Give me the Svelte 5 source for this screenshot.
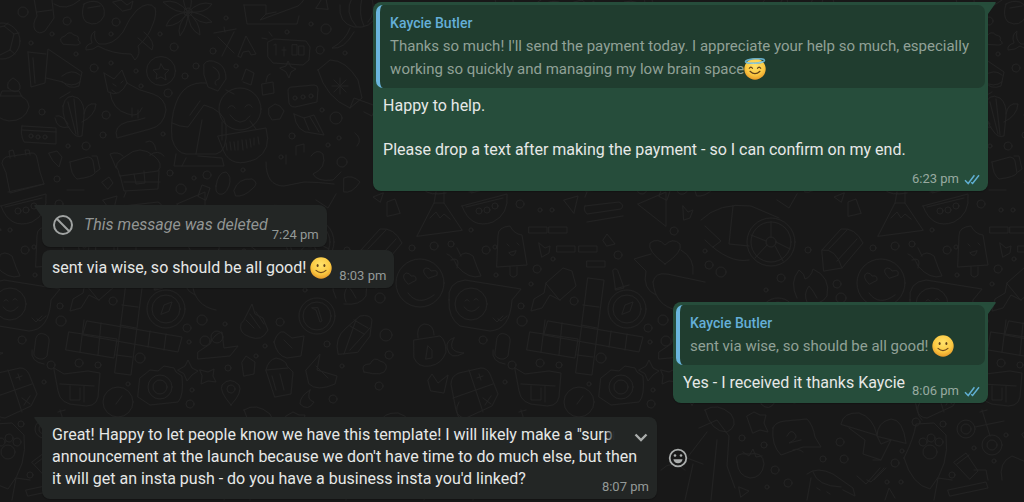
<script lang="ts">
  type Emoji = "smile" | "halo"

  interface Message {
    id: number
    mine: boolean
    text: string
    time: string
    tail?: boolean
    deleted?: boolean
    wide?: boolean
    hovered?: boolean
    emoji?: Emoji
    quote?: { name: string; text: string; emoji: Emoji }
  }

  const messages: Message[] = [
    {
      id: 1,
      mine: true,
      tail: true,
      wide: true,
      text: "Happy to help.\n\nPlease drop a text after making the payment - so I can confirm on my end.",
      time: "6:23 pm",
      quote: {
        name: "Kaycie Butler",
        text: "Thanks so much! I'll send the payment today. I appreciate your help so much, especially working so quickly and managing my low brain space",
        emoji: "halo",
      },
    },
    { id: 2, mine: false, tail: true, deleted: true, text: "This message was deleted", time: "7:24 pm" },
    { id: 3, mine: false, text: "sent via wise, so should be all good! ", emoji: "smile", time: "8:03 pm" },
    {
      id: 4,
      mine: true,
      tail: true,
      text: "Yes - I received it thanks Kaycie",
      time: "8:06 pm",
      quote: { name: "Kaycie Butler", text: "sent via wise, so should be all good! ", emoji: "smile" },
    },
    {
      id: 5,
      mine: false,
      tail: true,
      wide: true,
      hovered: true,
      text: "Great! Happy to let people know we have this template! I will likely make a \"surprise\"\nannouncement at the launch because we don't have time to do much else, but then\nit will get an insta push - do you have a business insta you'd linked?",
      time: "8:07 pm",
    },
  ]

  // small filler rings scattered between the doodles: x, y, radius
  const rings = [
    [23, 12, 5], [67, 21, 4], [116, 22, 4], [52, 34, 2], [31, 43, 2], [111, 34, 2], [160, 34, 2], [174, 47, 4],
    [213, 51, 3], [226, 18, 2], [311, 24, 2], [326, 29, 5], [320, 50, 4], [287, 32, 2], [345, 53, 2], [76, 54, 2],
    [94, 68, 4], [111, 63, 2], [136, 71, 2], [185, 76, 3], [196, 66, 3], [236, 66, 2], [168, 93, 4], [141, 86, 2],
    [42, 112, 3], [106, 115, 4], [322, 110, 2], [336, 118, 6], [103, 135, 3], [163, 134, 2], [86, 146, 4], [68, 146, 2],
    [292, 136, 3], [339, 138, 2], [328, 145, 2], [281, 157, 2], [342, 162, 5], [57, 179, 3], [170, 173, 3], [207, 175, 4],
    [181, 189, 5], [194, 178, 2], [243, 170, 2], [59, 204, 4], [79, 210, 2], [91, 210, 2], [10, 230, 2], [34, 247, 2],
    [434, 246, 4], [451, 244, 3], [25, 250, 4], [76, 269, 4], [92, 259, 2], [70, 284, 2], [35, 275, 2], [113, 301, 4],
    [60, 306, 3], [61, 321, 5], [157, 255, 4], [213, 231, 4], [244, 251, 2], [248, 265, 4], [260, 272, 5], [320, 278, 4],
    [305, 290, 2], [347, 250, 3], [376, 284, 4], [412, 248, 3], [380, 298, 5], [202, 320, 5], [187, 328, 4], [225, 324, 2],
    [280, 322, 4], [22, 340, 4], [51, 365, 4], [79, 363, 4], [98, 365, 3], [140, 358, 5], [189, 342, 2], [265, 346, 2],
    [327, 344, 3], [386, 335, 6], [389, 355, 4], [228, 368, 3], [256, 356, 2], [342, 366, 2], [44, 382, 2], [128, 384, 2],
    [192, 390, 2], [333, 399, 4], [379, 386, 4], [190, 404, 4], [379, 442, 4], [362, 459, 3], [383, 459, 4], [314, 470, 4],
    [327, 483, 4], [281, 438, 3], [303, 445, 3], [455, 422, 4], [441, 451, 2], [434, 463, 4], [426, 482, 2], [440, 482, 2],
    [30, 475, 3], [52, 448, 2], [72, 461, 2], [84, 435, 2], [21, 424, 3], [306, 487, 2],
  ]
</script>

{#snippet emojiIcon(kind: Emoji)}
  <svg class="emoji" viewBox="0 0 22 22" role="img" aria-label={kind}>
    <defs>
      <radialGradient id="face" cx="50%" cy="35%" r="65%">
        <stop offset="0" stop-color="#ffe26b" />
        <stop offset="0.65" stop-color="#fbc942" />
        <stop offset="1" stop-color="#e89b29" />
      </radialGradient>
    </defs>
    <circle cx="11" cy="11" r="10.7" fill="url(#face)" />
    {#if kind === "halo"}
      <path d="M5.3 10.3q1.6-2.5 3.2 0M13.5 10.3q1.6-2.5 3.2 0" fill="none" stroke="#60401b" stroke-width="1.2" stroke-linecap="round" />
      <path d="M6 13.3q5 4.8 10 0" fill="none" stroke="#60401b" stroke-width="1.2" stroke-linecap="round" />
      <ellipse cx="11" cy="3" rx="9.5" ry="2.2" fill="none" stroke="#66aeca" stroke-width="1.6" transform="rotate(-4 11 3)" />
      <path d="M3 4.6q7 2.2 16-.6" fill="none" stroke="#a6d8df" stroke-width="0.8" />
    {:else}
      <ellipse cx="7.6" cy="8.6" rx="1" ry="1.5" fill="#60401b" />
      <ellipse cx="14.4" cy="8.6" rx="1" ry="1.5" fill="#60401b" />
      <path d="M6 13.4q5 4.6 10 0" fill="none" stroke="#70491c" stroke-width="1.1" stroke-linecap="round" />
    {/if}
  </svg>
{/snippet}

<main class="chat">
  <svg class="wallpaper" aria-hidden="true">
    <defs>
      <pattern id="doodles" width="461" height="522" patternUnits="userSpaceOnUse">
        <g id="tile" fill="none" stroke="#222222" stroke-width="1" stroke-linejoin="round" stroke-linecap="round">
          {#each rings as [x, y, r]}
            <circle cx={x} cy={y} r={r} />
          {/each}
          <!-- globe, stocking, pot, cloud, whale -->
          <circle cx="2" cy="41" r="18" />
          <path d="M-12 30L4 26l10 8-4 16-12 6M4 26l4-3M14 34l5-1M10 50l5 4" />
          <path d="M34-2l3 18q-5 8-2 14 4 5 10 1l9-13-2-18M37 12l15-2M54 4q12 8 26-4" />
          <path d="M84 4q-4 12 2 18 12 6 18-6 2-10-6-14-8-2-14 2zM88 8l12-2" />
          <path d="M63 44q-6-6 2-8 4-6 9-1 6 1 4 5 5 4-1 5z" />
          <path d="M155 8q-6-8-18 2-8 8-14 22-10 14-24 12-6-4-4-13-6 4-3 12-7 2-6 7 8 0 12-4 14 8 33 8l4 6q6-6 3-14 10-8 15-22 4-10 2-16zM138 38l14 12q4-8-8-18" />
          <!-- flower -->
          <path d="M188 12q-8-12-2-20 10 8 2 20zM188 12q12-12 24-8-6 10-24 8zM188 12q14 0 24 10-12 4-24-10zM188 12q12 10 12 23-12-6-12-23zM188 12q0 14-8 24-4-10 8-24zM188 12q-8 14-22 14 4-12 22-14zM188 12q-12 2-25-10 14-4 25 10z" />
          <circle cx="188" cy="12" r="4" />
          <path d="M113 2l8-2 6 5 6-4-2 8-8 2z" />
          <!-- boots, bell, pumpkin -->
          <path d="M244 5l3 19h50l2-8M244 5h22v9l-6 6 38-14q8-6 8-14M266 14l10-2M316 8l9-14 3 15z" />
          <path d="M340 5q-2 18 14 22 18 2 22-12M352-2q-8 14 4 28M362-2q-4 16 2 28M372-2q4 16-4 24M350 28q-4 12-18 20 12 2 22-16" />
          <!-- letters and sign -->
          <path d="M214 33l22-4M224 27l1 5M218 37l16 16M234 32l-12 24M238 56l8-20 10 18-5 1-2-4-6 1-2 5z" />
          <path d="M268 42l6-3 32 2 4 6-1 13-6 5-30-2-5-6zM262 38l5 1M269 32l3 4M274 45l2-1v11M284 47v9M292 45v10h5v-10zM282 50h4M299 46h5v9h-5z" />
          <!-- coin, megaphone -->
          <circle cx="161" cy="71" r="14.5" />
          <path d="M161 64l3 5 5 1-4 4 1 6-5-3-5 2 1-5-4-4 6-1z" />
          <path d="M28 52l3 35 14-4 3-34 34 23-3 14q-10 4-16-4l-17-4M28 52l18 2M33 58l2 25M62 76q10-8 18-1M62 82q10 6 18 0" />
          <!-- fox -->
          <path d="M104 73l10 6 8-9 5 13q12 8 26 11 12 4 13 16-2 16-16 19l-33 9q-4-12 10-16 12-2 18-4M104 73l4 19q12 6 19-9M110 92q2 18 18 22 10 4 14-6M113 84l3 2M121 83l2-2M112 90l4 3M132 108v9M138 110v8" />
          <!-- person hugging emoji -->
          <path d="M204 64q4-6 14-1 8 4 8 16l-8 12-10-4-4-12zM213 67q8 4 6 12-6 2-3 6M206 83q-22-2-30 20-6 16-4 36 4 14 14 15l30 0q12-2 10-28-2-16-22-21l-16 22q-8 0-16-4M190 115l10-14M202 120l-6 34M226 90l8 4M176 154l-2 12h50l-2-8-24-2M186 158l-4 8M222 122v18" />
          <circle cx="240" cy="109" r="21" />
          <path d="M228 108q4-5 7 0M245 107q4-5 7 0M230 115q10 14 20 1M250 121l6 8" />
          <path d="M218 136l48-8q6 22-10 31-24 10-32-7zM226 143l1 7M230 142l1 8M234 142l1 8M238 141v9M242 140l1 10M246 140l1 8M250 139l1 8M254 138v7M258 137l1 7" />
          <!-- bubble, mitten, shell, star -->
          <path d="M288 91q0-4 4-4l22-2q4 0 4 4l-1 13-22 5q-5 0-6-4z" />
          <circle cx="295" cy="98" r="2" /><circle cx="303" cy="97" r="2" /><circle cx="311" cy="96" r="2" />
          <path d="M318 70l12-10q16 0 28 20l4 18-12 10q-24-10-32-38zM340 78v16M332 86h16M334 80l12 12M346 80l-12 12M350 108l4-10 22 8-4 10-8-4" />
          <path d="M294 114l10 4 10-3 10 20-12-2q-16 0-18-19zM304 118l5 12M310 117l9 15" />
          <path d="M280 68l6-2 2-5 3 6 5 2-5 3-2 6-3-6zM242 80l4-11 8 4-3 12-8-3M262 84l11-2 1 11-11 2zM266 82q1-8 4-8" />
          <path d="M269 108l6-4 5 2 4 5-4 8-8 1-3-5z" />
          <!-- ornament, cactus, tape, leaf -->
          <path d="M8 88q-2-6 5-10 8 4 7 11-4 6-12-1zM-4 96h26M0 96l2-5h17l3 6q6 2 7 10-4 14-20 14-12-2-16-10" />
          <path d="M60 98l10-6M63 106q3-14 15-8 7 6 6 18l-2 20q-6 2-10-4-10-12-9-26zM68 102l8 32M74 99l4 36M56 116q6-2 12 8M55 118q2 12 14 9M84 114q2-12 12-10-1 12-14 18" />
          <path d="M22 126l34 2v16l-32-2q-4-8-2-16zM22 130l34 2" />
          <circle cx="31" cy="136" r="2" /><circle cx="38" cy="137" r="2" /><circle cx="45" cy="137" r="2" />
          <!-- calendar, card, hut -->
          <path d="M2 163q0-4 4-6l26-4q4 0 5 5l3 14 4 12-34 9-4-20zM10 158l-1-7 4-1 2 7M26 155l-1-5 4 0 1 5M8 192l36-8" />
          <path d="M70 162l18-5q4 0 5 4l2 12q-2 4-18 6-6-4-7-17zM92 156l5 0 3 13-4 3M49 153l8-2 5 6-3 10-6-6z" />
          <path d="M118 170q-6-6 8-14 14-12 28 0 10 8 4 15l-38 5zM120 175l4 16 34-2 1-18M134 174l2 10 9-1-1-12M124 182h36M116 168q-4-10-6-14 8-3 13 2M146 142q8-4 10 8M150 155q8-6 14 1M126 192l-2 5M102 182l7-5 4 6-5 6zM67 190h17" />
          <!-- flip-flops, note, squirrel -->
          <path d="M216 186q2-14 10-14 6 4 3 14-4 10-10 8-4-2-3-8zM234 190q4-12 18-11 8 4 0 10-8 8-16 7zM198 196l4-11 8 3-4 12z" />
          <path d="M296 155v-9l8-2v8M286 155v9M311 156q6-8 12-2 4 14-10 20 4 8 20 6l8-8M266 162q0 24 18 24l20-4q14 0 30 2M344 178q8-4 16 4-8 12-16 10zM355 133q8 6 2 13" />
          <!-- mountain, watermelon, popsicle -->
          <path d="M417 236l17-33h10l18 27zM436 192l-2 11M444 192v11M430 218l6-6 4 6 4-4 6 5M424 190q6 6 22 3" />
          <path d="M1 206l45-12q2 20-14 28-22 8-31-16zM5 207l37-9" />
          <circle cx="18" cy="211" r="3" /><circle cx="26" cy="210" r="3" /><circle cx="34" cy="206" r="3" />
          <path d="M37 235q0-8 12-9 4 8 12 9l5 30-30 2zM49 267v8q3 4 7 0v-8M46 244l2 2M56 243l2 2M48 253q5 6 7-2z" />
          <path d="M103 200l14-4-4 17zM68 227h18v6H68zM88 227h18v6H88zM96 246h18v6H96zM118 246h18v6h-18zM126 261h18v6h-18z" />
          <path d="M124 206l34-4q6 3 2 7l-34 5q-4-4-2-8zM126 222l36-6M177 204l28-12v34zM222 206l5 6 5-2-3 8-6 2zM78 243l6 5 5-2-1 7-7 4zM142 240l4-6 8 10-8 2z" />
          <!-- peppers, heart face, chat bubble -->
          <path d="M-14 254q6 2 10 12 12 14 24 10-4-8-8-20-8-6-13 0M-4 248l4 8M-10 260q10-4 6 8" />
          <circle cx="420" cy="283" r="24" />
          <path d="M408 284q-8-8-2-11 4 0 5 3 6-1 5 4zM428 278q-8-8-2-10 4 0 5 3 8-2 6 4zM408 293q10 14 26 2" />
          <path d="M-12 300q-2-18 16-20l56 9-9 11q-2 30-22 31l-30-5q-12-8-11-26z" />
          <circle cx="10" cy="304" r="16" />
          <path d="M4 301q2-3 4 0M13 300q2-3 4 0M3 307q7 9 15 0M32 318l4 4 6-6M37 319l3 2 6-5" />
          <!-- brush -->
          <path d="M85 283l17-15 9 3 4 15-16 14zM85 283l-2 10-10 6-3 12 11-3 8-13 10 5" />
          <!-- crossword -->
          <path d="M127 278l16 2-12 95-16-2zM87 321l95 16-4 15-95-17zM69 332l48 7-3 19-48-8zM122 305l16 2M120 325l16 3M116 355l16 2M101 323l-3 32M150 331l-2 16M166 334l-2 16M84 320l-4 32" />
          <!-- compass, cat heart, sausages -->
          <circle cx="166" cy="309" r="19" /><circle cx="166" cy="309" r="14" />
          <path d="M161 314l3-9 8-3-3 9zM152 270q4-4 6 4l5 14-8 2zM154 289l14-4" />
          <path d="M204 264q-18-13-15-21 8-6 15 2 8-8 15-1 3 8-15 20zM190 254l-17 5 12 12q-4 18 10 24M220 250q14 8 12 24M192 282q2-10 14-8l38 8M192 282q2 24 24 28" />
          <!-- cart wheel, pencil, flame -->
          <circle cx="310" cy="242" r="24" /><circle cx="310" cy="242" r="20" /><circle cx="310" cy="242" r="5" />
          <path d="M310 237v-15M315 242l14 7M306 245l-12 13M314 246l8 15M305 241l-15-6M240 220q18-18 50-14l28 12M244 240q24 24 44 20M272 206l-4 38 20 2M244 226l16 15-8 6M316 200l12 8 8-14" />
          <path d="M361 250l19-21q14-2 22 14l-21 25-18 3zM361 250q14-2 20 18M368 249l18-19M376 261l20-22M380 202l-7-5 10-4zM387 216l0-14 8-3 5 14z" />
          <path d="M336 298q-8-16 2-28 6 4 6 9 6-2 8-10 18 8 14 27-6 10-22 8M346 302q-4-8 2-16 4 4 8 12" />
          <!-- lock, mic, moon -->
          <path d="M414 340l26-4q6 4 6 16-4 12-16 14-12 2-16-8zM418 338q-2-12 6-14 10 0 10 11M428 346l4 4v8l-6 1zM36 338q2-6 8-4 6 2 5 8l-2 14q-4 5-10 2-4-2-3-6zM32 350q-2 12 12 14M454 338q-8 14 10 15-14 8-17-5-1-8 7-10z" />
          <!-- dice, shield, camera -->
          <path d="M-10 384q0-8 8-11l22-5q6 0 9 6l8 20-6 12-26 12q-8 0-10-8zM8 370l14 42M-8 398l40-14M16 378l6-2M18 374l2 6M22 398l8 6M30 396l-6 9" />
          <path d="M54 368l10 6 24-3 12 2-2 24q-2 12-20 8-18 0-20-14zM60 384l34 2M70 386v14h10v-12M84 386v16" />
          <path d="M140 378l10-8 8 1 6-5 10 2 2 4 6 4q2 20-4 26l-28 3-12-8zM178 370l7-4 3-6 4 8 6 3-6 4-5 6-3-7z" />
          <circle cx="160" cy="387" r="12" /><circle cx="160" cy="387" r="7" /><circle cx="118" cy="402" r="15" />
          <path d="M116 404l6-8M428 380l4-6 6 9 10-8-4 18-13-2zM200 370l8 2 6-3-1 7 3 6-8-1-7 3 1-8z" />
          <!-- hands, clock, corn -->
          <path d="M244 320l8-16 3 10 8 4 5 12q-6 12-18 7-12-4-9-13zM250 314l10 14M256 312l8 12M246 320l8 8M274 342q4-12 10-10l8 6 12-2-3 20-14 2q-10-2-13-16zM284 340l8 8M306 370l14-16-3 16 20 6-2 8q-18 8-26 0zM316 366l12 12" />
          <circle cx="317" cy="316" r="18" /><circle cx="317" cy="316" r="14" /><path d="M312 308l4 2 4 12 2-1-4-13z" />
          <path d="M338 354q-4-16 8-26l14-12q10-2 12 4l-2 16-12 16zM344 354l12-34M350 350l20-22M354 320l14 8M350 326l14 8" />
          <path d="M198 352l12-8q4-10 12-12l2 16 14-2-8 10-32 3z" /><circle cx="205" cy="341" r="5" /><circle cx="217" cy="337" r="6" />
          <!-- cupcake, pin, cloud -->
          <path d="M266 370q2-10 10-12 10 2 11 8l6 6-2 22-16 3zM266 370l22-2M272 376l4 14M280 374l4 16M242 362l4-6 9 6-1 12-10 2zM231 405q-12-14-9-20 8-9 17 0 4 7-8 20z" /><circle cx="231" cy="389" r="4" />
          <path d="M364 372q-4-8 6-8 4-8 10-3 8 2 6 8-2 8-22 3zM310 390q-10 6-10 14 8 8 14-2-8-2-4-12z" />
          <!-- gnome, speech bubble, mushroom -->
          <path d="M238 428l18-8 12 16-2 30 8 22M246 432l-20 26 16 6M232 464l-8 36M256 440l-6 60M244 410q12-8 26 4 8 12-4 18-16 0-22-22z" />
          <path d="M312 428q2-6 12-7l22-2q6 6 8 18l6 10-18 0-22 8q-10-10-8-27zM326 436q4-8 8-2 4 4-6 9l12-3M286 416l7-4 6 3 6 0-2 8 4 9-8-2-7 3z" />
          <path d="M380 424q2-12 18-11 14 4 18 22zM416 436q0-14 14-17 12 0 15 24zM388 428l16 12-2 14 18 6M416 436l4 8 10-4-10 20-8 0" />
          <!-- paw, glass, scooter, tomato -->
          <path d="M-18 458q10-20 12-34l18-1 12 12q4 30-16 54-18-4-26-31z" /><circle cx="8" cy="452" r="7" /><circle cx="1" cy="442" r="4" /><circle cx="9" cy="438" r="4" /><circle cx="17" cy="442" r="4" />
          <path d="M32 462l12-9 12 18-8 8zM35 464l12-9M26 490l38-8 2 6-38 8zM52 470h12l2 10" />
          <circle cx="44" cy="429" r="9" /><circle cx="44" cy="429" r="5" /><circle cx="70" cy="445" r="10" /><circle cx="70" cy="445" r="5" />
          <path d="M53 427l29-6M60 410l8 26M58 412l7-2" />
          <path d="M276 462q-4-10 12-8 14-3 15 10-2 14-14 14-12-2-13-16zM282 452l6 4 4-7 3 8 6-1M278 487l10 4-8 6zM332 450q6-2 10 2" />
          <path d="M346 474q10-8 26 0l20 14 2 8-12-6M352 472q4 14 28 15M350 478l-4 22M356 488l3 2M366 492l3 2M396 476l9 8 14-16M406 480l4 2 13-14M413 480l12-12M424 500l4-12 6 10" />
          <path d="M0 420q-8-8-2-18M12 500l4-22 14 2M80 480q-4-18 10-24l14 6M100 434l18-14 10 16-16 16zM120 470l20-4 8 20-24 6M180 430l14 4-2 16-16-2zM200 470q12-12 24 0M160 480q6-20 16-4" />
        </g>
        <use href="#tile" x="461" />
        <use href="#tile" x="-461" />
      </pattern>
    </defs>
    <rect width="100%" height="100%" fill="url(#doodles)" />
  </svg>

  {#each messages as message (message.id)}
    <div class="row" class:mine={message.mine} class:tail={message.tail}>
      <article
        class="bubble"
        class:wide={message.wide}
        class:quoted={message.quote}
        class:deleted={message.deleted}
      >
        {#if message.tail}
          <svg class="pointer" viewBox="0 0 8 13" aria-hidden="true">
            <path d="M0 0h6.8q1.8 0 .6 1.6L0 12z" />
          </svg>
        {/if}

        {#if message.quote}
          <blockquote>
            <strong>{message.quote.name}</strong>
            <p>{message.quote.text}{@render emojiIcon(message.quote.emoji)}</p>
          </blockquote>
        {/if}

        <div class="body">
          {#if message.deleted}
            <svg class="ban" viewBox="0 0 22 22" aria-hidden="true">
              <circle cx="11" cy="11" r="9" />
              <path d="M4.8 4.8l12.4 12.4" />
            </svg>
          {/if}
          <p class="text">{message.text}{#if message.emoji}{@render emojiIcon(message.emoji)}{/if}</p>
          <footer>
            <time>{message.time}</time>
            {#if message.mine}
              <svg class="ticks" viewBox="0 0 16 11" role="img" aria-label="Read">
                <path d="M1 6.2l3.2 3.3L10.4 1.3M7.2 8.2l1.4 1.3L15 1.3" />
              </svg>
            {/if}
          </footer>
        </div>

        {#if message.hovered}
          <button class="menu" aria-label="Message options">
            <svg viewBox="0 0 14 9" aria-hidden="true"><path d="M1.5 1.5L7 7l5.5-5.5" /></svg>
          </button>
        {/if}
      </article>

      {#if message.hovered}
        <button class="react" aria-label="React to message">
          <svg viewBox="0 0 20 20" aria-hidden="true">
            <circle cx="10" cy="10" r="8.3" />
            <path class="solid" d="M5.4 11.3h9.2q-.8 4-4.6 4t-4.6-4z" />
            <circle class="solid" cx="7" cy="7.5" r="1.3" />
            <circle class="solid" cx="13" cy="7.5" r="1.3" />
          </svg>
        </button>
      {/if}
    </div>
  {/each}
</main>

<style>
  :global(body) {
    background: #181818;
  }

  .chat {
    position: relative;
    box-sizing: border-box;
    min-height: 100vh;
    padding: 2px 36px 2px 42px;
    overflow: hidden;
    font-family: Roboto, sans-serif;
    font-size: 16px;
    line-height: 22px;
    color: #e6e8e7;
  }

  .wallpaper {
    position: absolute;
    inset: 0;
    width: 100%;
    height: 100%;
  }

  .row {
    position: relative;
    display: flex;
    align-items: center;
    gap: 11px;
    margin-top: 3px;
  }

  .row.tail {
    margin-top: 14px;
  }

  .row:nth-of-type(1) {
    margin-top: 0;
  }

  .mine {
    justify-content: flex-end;
  }

  .bubble {
    --bubble: #232625;
    position: relative;
    box-sizing: border-box;
    max-width: 65%;
    padding: 3px;
    border-radius: 8px;
    background: var(--bubble);
    box-shadow: 0 1px 1px rgba(0, 0, 0, 0.2);
  }

  .mine .bubble {
    --bubble: #264d3b;
  }

  .wide {
    width: 65%;
  }

  .tail:not(.mine) .bubble {
    border-top-left-radius: 0;
  }

  .mine.tail .bubble {
    border-top-right-radius: 0;
  }

  .pointer {
    position: absolute;
    top: 0;
    right: 100%;
    width: 8px;
    height: 13px;
    fill: var(--bubble);
    transform: scaleX(-1);
  }

  .mine .pointer {
    right: auto;
    left: 100%;
    transform: none;
  }

  blockquote {
    margin: 0;
    padding: 7px 10px 7px 10px;
    border-left: 4px solid #6bb6df;
    border-radius: 7px;
    background: #203d2f;
    font-size: 15px;
    line-height: 23px;
    color: #91a197;
  }

  strong {
    display: block;
    font-size: 14px;
    font-weight: 500;
    color: #64afd8;
  }

  p {
    margin: 0;
  }

  .body {
    display: flex;
    gap: 7px;
    padding: 4px 5px 6px 7px;
  }

  .quoted .body {
    padding-top: 7px;
  }

  .deleted .body {
    gap: 4px;
  }

  .text {
    white-space: pre-line;
  }

  .wide .body {
    display: flow-root;
  }

  .emoji {
    width: 22px;
    height: 22px;
    margin: -3px 0;
    vertical-align: -3px;
  }

  footer {
    display: flex;
    flex: none;
    align-items: center;
    align-self: flex-end;
    justify-content: flex-end;
    gap: 5px;
    margin-bottom: -5px;
    font-size: 13px;
    line-height: 16px;
    color: #939997;
  }

  .mine footer {
    color: #98aaa0;
  }

  /* the time shares the last line when that line is short enough */
  .wide .text {
    display: inline;
  }

  .wide footer {
    float: right;
    margin-top: 11px;
  }

  .wide.quoted footer {
    clear: both;
    float: none;
    margin-top: 10px;
  }

  .ticks {
    width: 16px;
    height: 11px;
    fill: none;
    stroke: #60afd3;
    stroke-width: 1.5;
  }

  .deleted .text {
    margin: 2px 0;
    font-style: italic;
    color: #929594;
  }

  .ban {
    flex: none;
    width: 22px;
    height: 22px;
    margin: 2px 6px 0 0;
    fill: none;
    stroke: #a0a3a2;
    stroke-width: 2;
  }

  button {
    padding: 0;
    border: 0;
    background: none;
    color: #aaadac;
    cursor: pointer;
  }

  button svg {
    display: block;
    fill: none;
    stroke: currentColor;
    stroke-width: 2;
  }

  .menu {
    position: absolute;
    top: 3px;
    right: 4px;
    width: 48px;
    height: 28px;
    padding: 6px 5px 0 0;
    border-radius: 8px;
    background: linear-gradient(to right, transparent, var(--bubble) 20%);
  }

  .menu svg {
    width: 14px;
    height: 9px;
    margin-left: auto;
    stroke-width: 2.4;
  }

  .react svg {
    width: 20px;
    height: 20px;
    stroke-width: 1.8;
  }

  .react .solid {
    fill: currentColor;
    stroke: none;
  }
</style>
